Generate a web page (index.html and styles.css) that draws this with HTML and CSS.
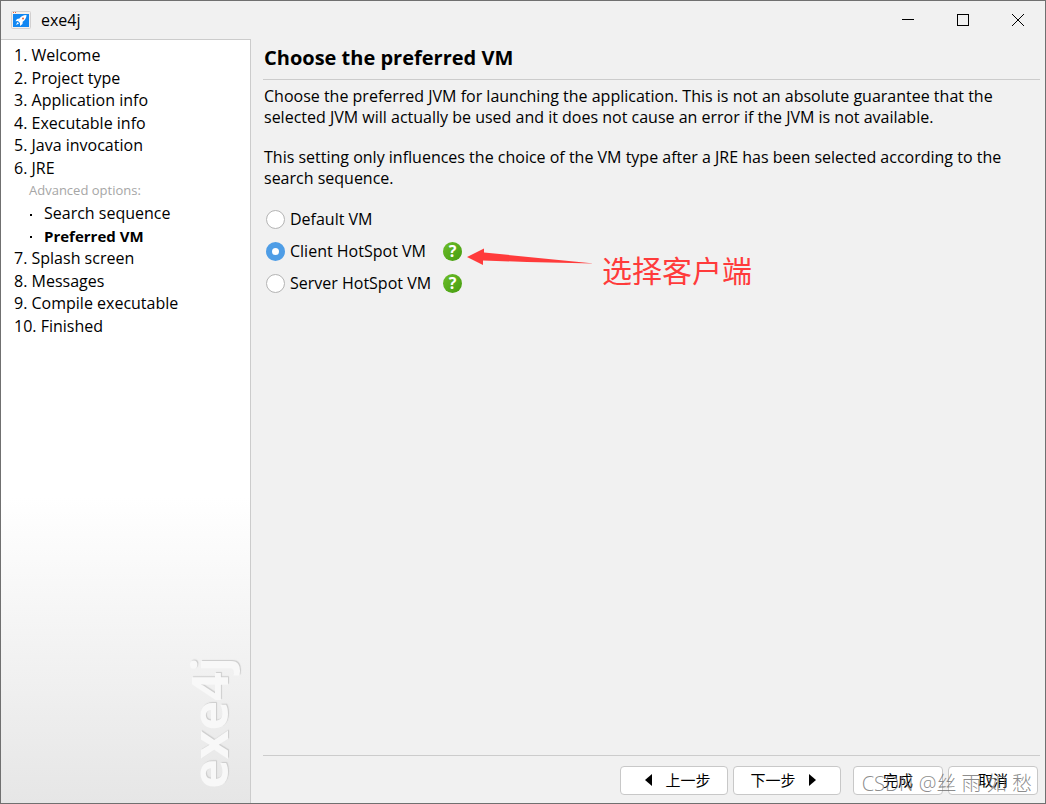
FILE: index.html
```
<!DOCTYPE html>
<html lang="zh-CN">
<head>
    <meta charset="UTF-8">
    <meta name="viewport" content="width=device-width, initial-scale=1.0">
    <title>exe4j</title>
    <link rel="stylesheet" href="styles.css">
</head>
<body>

<div class="window">

    <!-- Title bar -->
    <header class="titlebar">
        <svg class="app-icon" width="20" height="18" viewBox="0 0 20 18" aria-hidden="true">
            <rect x="0.5" y="0.5" width="19" height="17" rx="1" fill="#f4f1ef" stroke="#d2d0d0"/>
            <rect x="2" y="1" width="1" height="1" fill="#e8603c"/>
            <rect x="4" y="1" width="1" height="1" fill="#e8603c"/>
            <rect x="2" y="3" width="16" height="13" fill="#1287f2"/>
            <path d="M15.500 4 C12 4 10 5.500 8.500 7.500 L6 8 L4.500 10.200 L7 10 L9 12 L9 15 L11.500 13 L11.700 10.800 C14 9 15.500 7 15.500 4Z" fill="#fff"/>
            <path d="M6.500 11 L5 14 L8 12.500Z" fill="#fff"/>
            <circle cx="12" cy="7.500" r="1" fill="#e8603c"/>
        </svg>
        <span class="app-title">exe4j</span>
        <div class="window-controls">
            <button type="button" aria-label="Minimize">
                <svg width="12" height="12" viewBox="0 0 12 12"><path d="M0 5.500H12" stroke="#000"/></svg>
            </button>
            <button type="button" aria-label="Maximize">
                <svg width="12" height="12" viewBox="0 0 12 12"><rect x="0.5" y="0.5" width="11" height="11" fill="none" stroke="#000"/></svg>
            </button>
            <button type="button" aria-label="Close">
                <svg width="12" height="12" viewBox="0 0 12 12"><path d="M0 0L12 12M12 0L0 12" stroke="#000"/></svg>
            </button>
        </div>
    </header>

    <div class="content">

        <!-- Wizard steps -->
        <aside class="sidebar">
            <ul class="steps">
                <li>1. Welcome</li>
                <li>2. Project type</li>
                <li>3. Application info</li>
                <li>4. Executable info</li>
                <li>5. Java invocation</li>
                <li>6. JRE</li>
                <li class="advanced">Advanced options:</li>
                <li class="sub">Search sequence</li>
                <li class="sub current">Preferred VM</li>
                <li>7. Splash screen</li>
                <li>8. Messages</li>
                <li>9. Compile executable</li>
                <li>10. Finished</li>
            </ul>
            <div class="brand">exe4j</div>
        </aside>

        <main class="page">
            <h1>Choose the preferred VM</h1>

            <div class="page-body">
                <p>Choose the preferred JVM for launching the application. This is not an absolute guarantee that the<br>
                selected JVM will actually be used and it does not cause an error if the JVM is not available.</p>
                <p>This setting only influences the choice of the VM type after a JRE has been selected according to the<br>
                search sequence.</p>

                <div class="options">
                    <input type="radio" name="vm" id="vm-default">
                    <label for="vm-default">Default VM</label>
                    <span></span>

                    <input type="radio" name="vm" id="vm-client" checked>
                    <label for="vm-client">Client HotSpot VM</label>
                    <div class="help-cell">
                        <button type="button" class="help" aria-label="Help">?</button>
                        <svg class="arrow" width="127" height="18" viewBox="0 0 127 18" aria-hidden="true">
                            <path d="M0 9 L17 0.500 L17 4.500 L127 15.500 L60 14 L16 12.500 L16 17Z" fill="#ff3b3b"/>
                        </svg>
                        <span class="note">选择客户端</span>
                    </div>

                    <input type="radio" name="vm" id="vm-server">
                    <label for="vm-server">Server HotSpot VM</label>
                    <div class="help-cell">
                        <button type="button" class="help" aria-label="Help">?</button>
                    </div>
                </div>
            </div>

            <!-- Wizard buttons -->
            <footer class="buttons">
                <button type="button" class="wide">
                    <svg width="7" height="12" viewBox="0 0 7 12"><path d="M7 0V12L0 6Z"/></svg>
                    上一步
                </button>
                <button type="button" class="wide next">
                    下一步
                    <svg width="7" height="12" viewBox="0 0 7 12"><path d="M0 0V12L7 6Z"/></svg>
                </button>
                <button type="button" class="finish">完成</button>
                <button type="button">取消</button>
                <span class="watermark">CSDN @丝 雨 如 愁</span>
            </footer>
        </main>

    </div>
</div>

</body>
</html>
```
FILE: styles.css
```
* {
    box-sizing: border-box;
}

body {
    margin: 0;
    font-family: 'Open Sans', 'Noto Sans CJK SC', sans-serif;
    font-size: 16px;
    color: #000;
    background: #f1f1f1;
}

button {
    font-family: inherit;
    font-size: inherit;
    color: inherit;
    padding: 0;
    border: none;
    background: none;
}

.window {
    display: flex;
    flex-direction: column;
    min-height: 100vh;
    border: 1px solid #707070;
}

/* Title bar */
.titlebar {
    display: flex;
    align-items: center;
    height: 38px;
    padding-left: 10px;
}

.app-title {
    margin-left: 10px;
    line-height: 20px;
}

.window-controls {
    display: flex;
    margin-left: auto;
}

.window-controls button {
    display: flex;
    align-items: center;
    justify-content: center;
    width: 55px;
    height: 38px;
}

.content {
    display: flex;
    flex: 1;
}

/* Steps on the left */
.sidebar {
    display: flex;
    flex-direction: column;
    justify-content: space-between;
    width: 250px;
    border-top: 1px solid #ccc;
    border-right: 1px solid #ccc;
    background: linear-gradient(#fff 60%, #e6e6e6);
}

.steps {
    display: grid;
    grid-auto-rows: 1fr;
    align-items: center;
    height: 293px;
    margin: 4px 0 0;
    padding: 0 0 0 13px;
    list-style: none;
    line-height: 22px;
}

.steps .advanced {
    padding-left: 15px;
    font-size: 13px;
    color: #a6a6a6;
}

.steps .sub {
    display: flex;
    align-items: center;
    padding-left: 16px;
}

.steps .sub::before {
    content: '';
    width: 2px;
    height: 2px;
    margin: 3px 12px 0 0;
    background: #000;
}

.steps .current {
    font-size: 15px;
    font-weight: bold;
}

.brand {
    align-self: flex-end;
    margin: 0 14px 14px 0;
    writing-mode: vertical-rl;
    transform: rotate(180deg);
    font-size: 50px;
    font-weight: bold;
    line-height: 54px;
    color: #f8f8f8;
    text-shadow: 1px 1px 1px #ccc;
}

/* Right side */
.page {
    display: flex;
    flex: 1;
    flex-direction: column;
    padding: 0 5px 0 12px;
}

h1 {
    margin: 0;
    padding: 4px 1px 7px;
    border-bottom: 1px solid #ccc;
    font-size: 20px;
    line-height: 29px;
}

.page-body {
    flex: 1;
    padding: 6px 1px;
}

.page-body p {
    margin: 0 0 19px;
    line-height: 21px;
    white-space: nowrap;
}

.page-body p + p {
    margin-bottom: 14px;
}

.options {
    display: grid;
    grid-template-columns: 26px 143px auto;
    grid-auto-rows: 32px;
    align-items: center;
    justify-content: start;
}

.options input {
    appearance: none;
    width: 19px;
    height: 19px;
    margin: 0 0 0 2px;
    border: 1px solid #b4b4b4;
    border-radius: 50%;
    background: #fff;
}

.options input:checked {
    border: 6px solid #4e9de6;
}

.options label {
    white-space: nowrap;
    line-height: 20px;
}

.help-cell {
    position: relative;
    padding-left: 10px;
}

.help {
    display: block;
    width: 19px;
    height: 19px;
    border-radius: 50%;
    background: linear-gradient(135deg, #6cbd2a, #459c10);
    color: #fff;
    font-weight: bold;
    line-height: 19px;
}

/* Red arrow with its caption */
.arrow {
    position: absolute;
    top: 6px;
    left: 34px;
}

.note {
    position: absolute;
    top: 9px;
    left: 169px;
    font-size: 30px;
    line-height: 40px;
    color: #ff3b3b;
    white-space: nowrap;
}

/* Bottom buttons */
.buttons {
    position: relative;
    display: flex;
    justify-content: flex-end;
    gap: 5px;
    padding: 10px 2px 8px;
    border-top: 1px solid #ccc;
}

.buttons button {
    display: flex;
    align-items: center;
    justify-content: center;
    gap: 13px;
    width: 90px;
    height: 29px;
    padding-bottom: 2px;
    border: 1px solid #c8c8c8;
    border-radius: 4px;
    background: #fff;
    font-size: 15px;
}

.buttons .wide {
    width: 108px;
    padding-left: 8px;
}

.buttons .next {
    padding: 0 8px 2px 0;
}

.buttons .finish {
    margin-left: 7px;
}

.watermark {
    position: absolute;
    right: 8px;
    bottom: 6px;
    font-size: 20px;
    font-weight: 300;
    line-height: 26px;
    color: rgba(110, 110, 110, 0.8);
    white-space: nowrap;
    pointer-events: none;
}
```
